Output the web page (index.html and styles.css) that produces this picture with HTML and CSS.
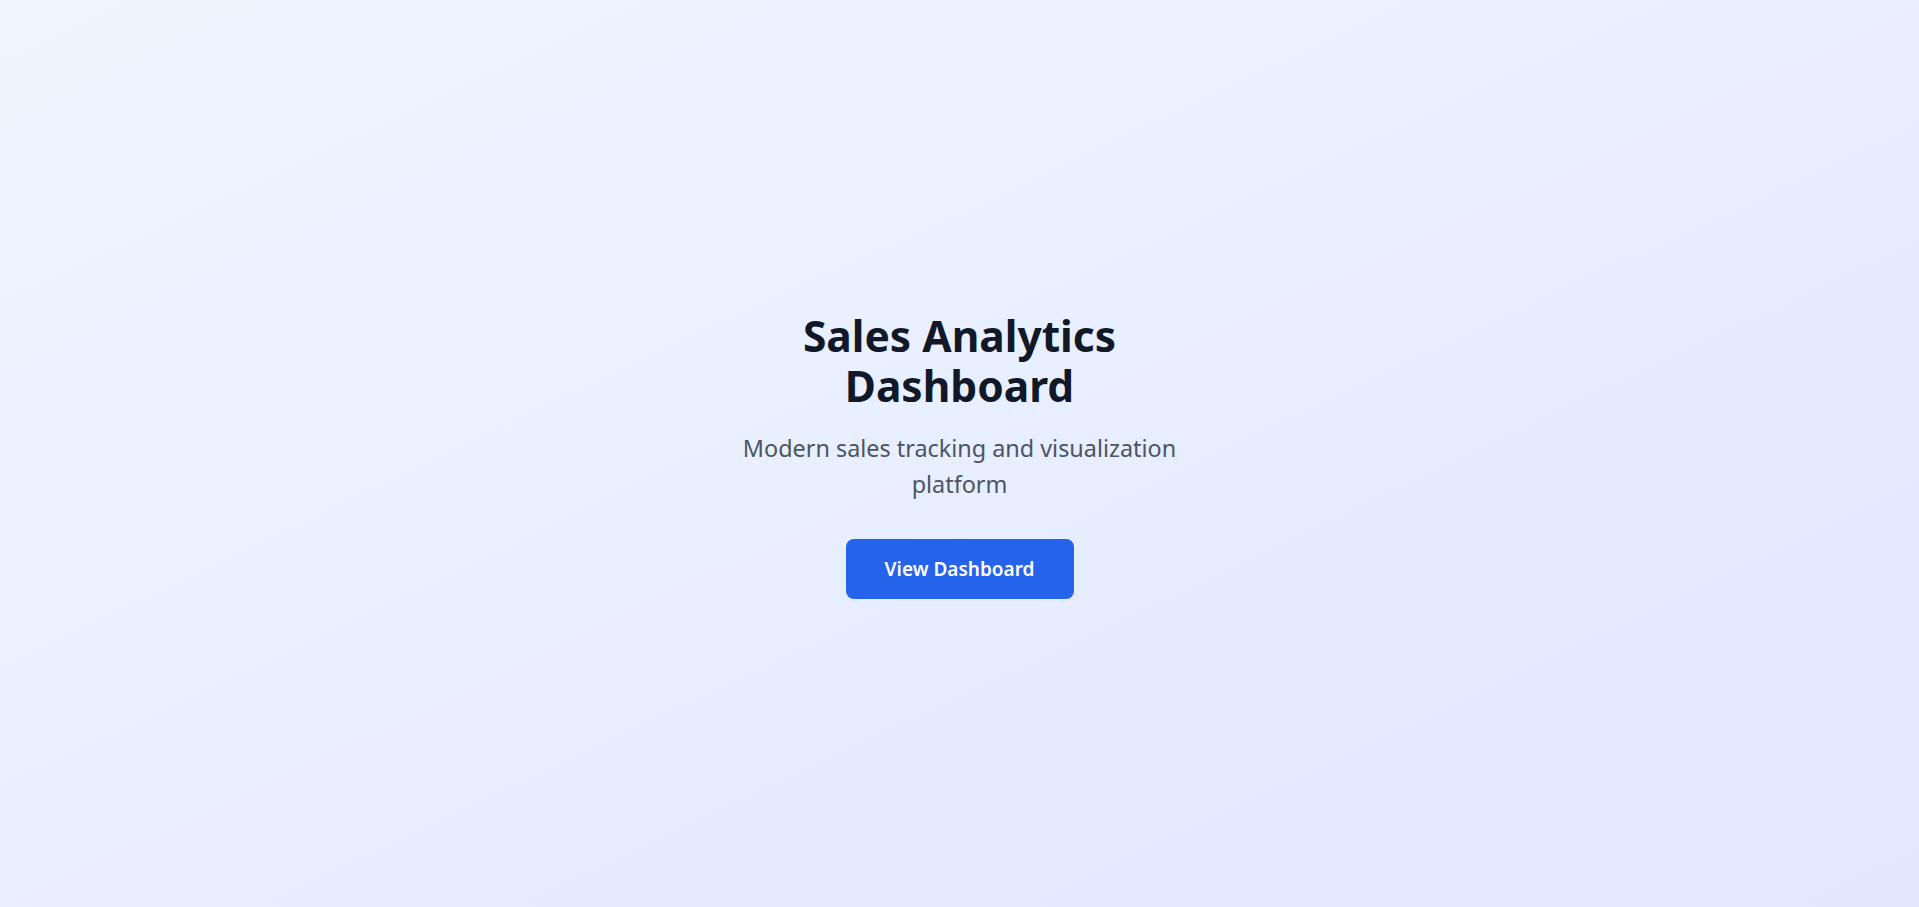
FILE: index.html
```html
<!DOCTYPE html>
<html lang="en">
<head>
<meta charset="utf-8">
<title>Sales Analytics Dashboard</title>
<link rel="stylesheet" href="styles.css">
</head>
<body>
<main class="hero">
  <div class="hero-inner">
    <h1 class="hero-title">Sales Analytics Dashboard</h1>
    <p class="hero-subtitle">Modern sales tracking and visualization platform</p>
    <button class="hero-button" type="button">View Dashboard</button>
  </div>
</main>
</body>
</html>
```

FILE: styles.css
```css
* { box-sizing: border-box; }
html, body { margin: 0; padding: 0; height: 100%; }
body {
  font-family: "Noto Sans", "Open Sans", sans-serif;
  background: linear-gradient(to bottom right, #eff6ff, #e0e7ff);
}
.hero {
  min-height: 100vh;
  padding-top: 2px;
  display: flex;
  align-items: center;
  justify-content: center;
}
.hero-inner {
  max-width: 448px;
  text-align: center;
  display: flex;
  flex-direction: column;
  align-items: center;
}
.hero-title {
  margin: 0 0 19px;
  font-size: 42.5px;
  line-height: 50px;
  font-weight: 700;
  color: #111827;
}
.hero-subtitle {
  margin: 0 0 37px;
  font-size: 23.4px;
  line-height: 36px;
  color: #4b5563;
}
.hero-button {
  width: 228px;
  height: 60px;
  border: none;
  border-radius: 8px;
  background: #2563eb;
  color: #ffffff;
  font-family: inherit;
  font-size: 19px;
  font-weight: 600;
  cursor: pointer;
}
```
